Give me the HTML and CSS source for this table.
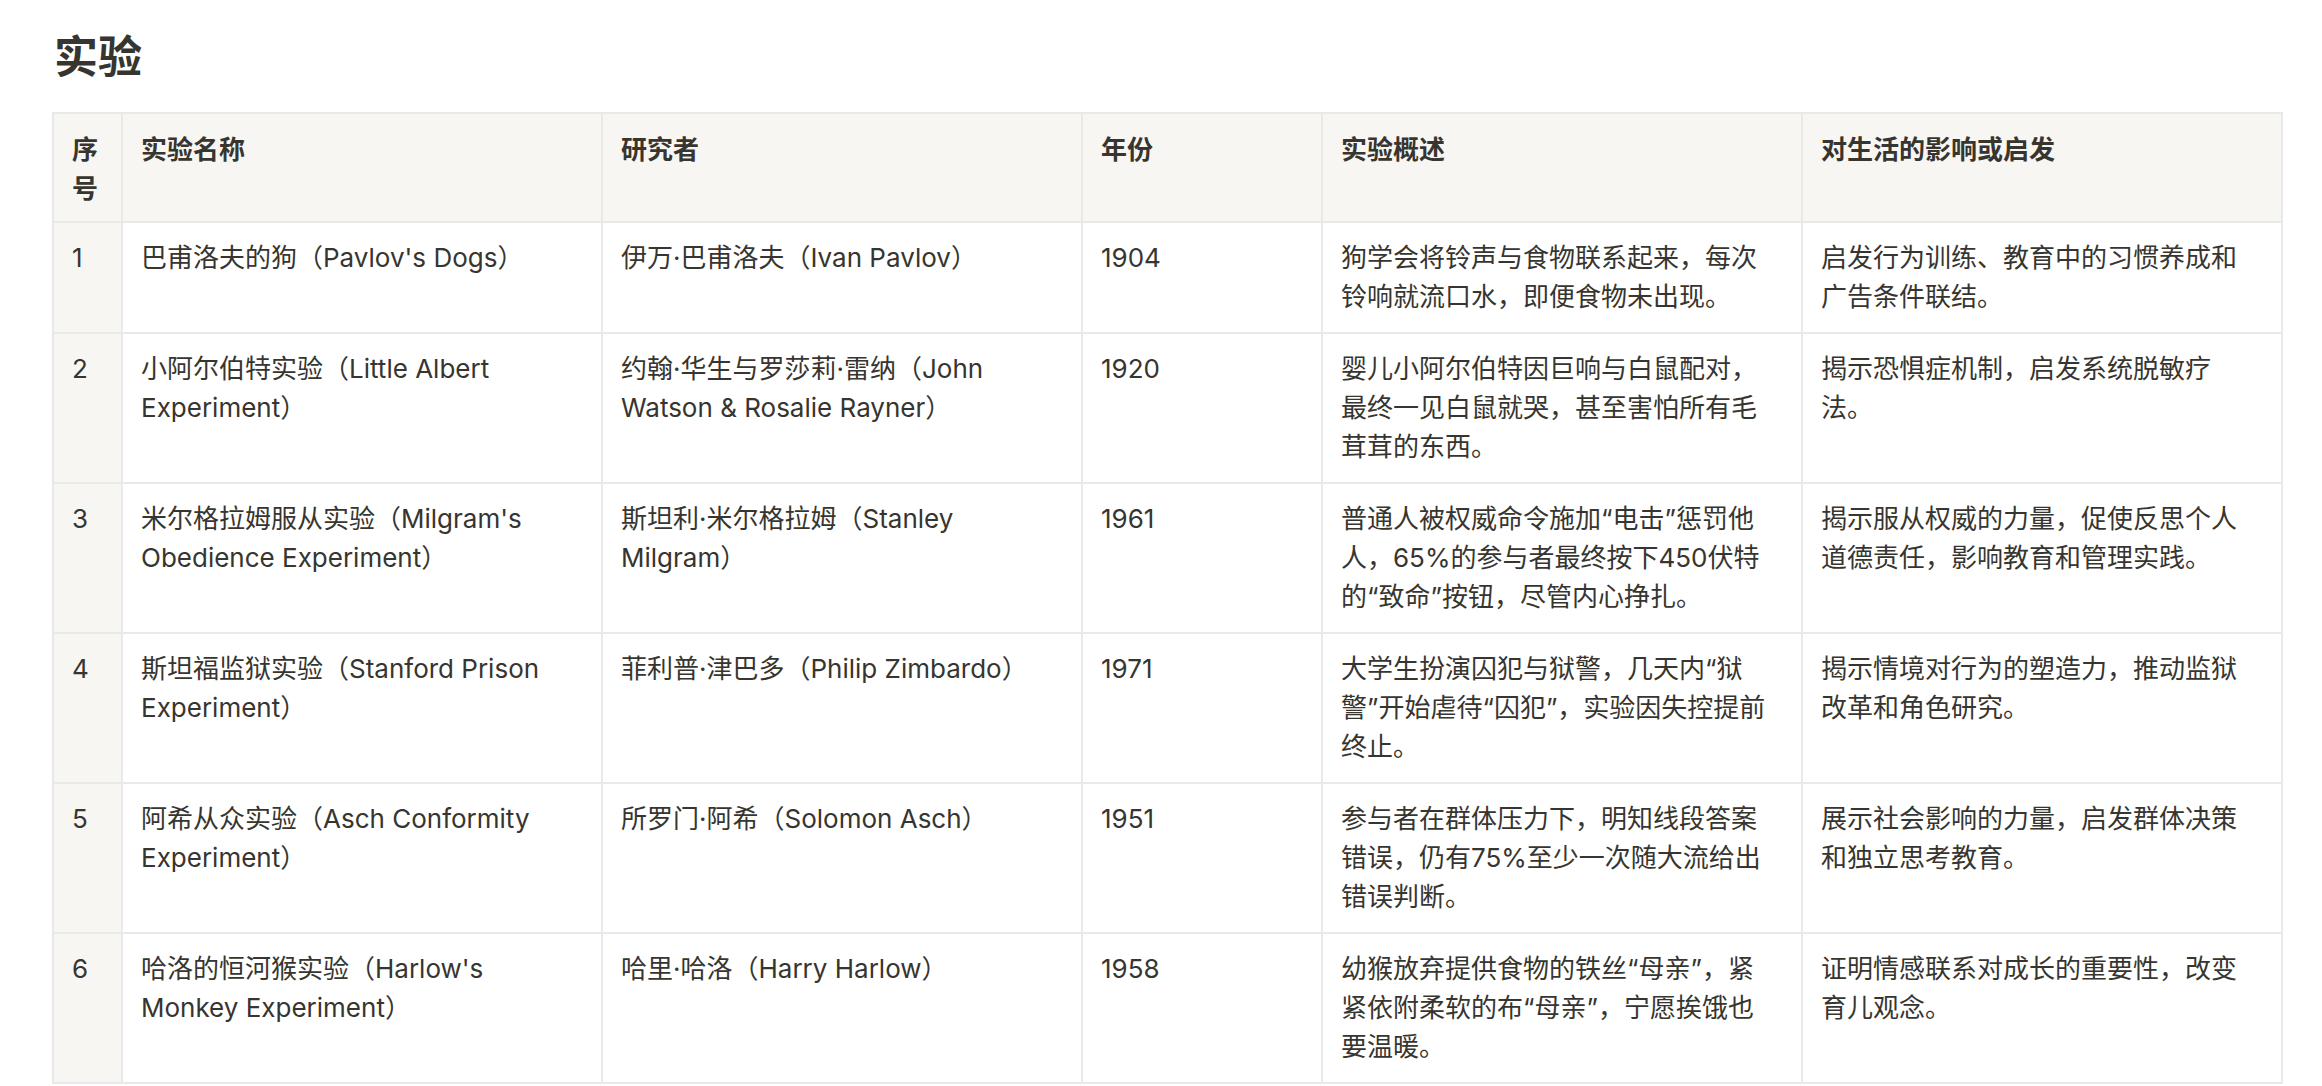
FILE: index.html
```html
<!DOCTYPE html>
<html lang="zh-CN">
<head>
<meta charset="utf-8">
<title>实验</title>
<link rel="stylesheet" href="styles.css">
</head>
<body>
<main class="page">
  <h1 class="page-title">实验</h1>
  <table class="data-table">
    <colgroup>
      <col class="col-idx">
      <col class="col-wide">
      <col class="col-wide">
      <col class="col-narrow">
      <col class="col-wide">
      <col class="col-wide">
    </colgroup>
    <thead>
      <tr>
        <th class="cell row-head">序号</th>
        <th class="cell">实验名称</th>
        <th class="cell">研究者</th>
        <th class="cell">年份</th>
        <th class="cell">实验概述</th>
        <th class="cell">对生活的影响或启发</th>
      </tr>
    </thead>
    <tbody>
      <tr>
        <td class="cell row-head">1</td>
        <td class="cell">巴甫洛夫的狗（Pavlov's Dogs）</td>
        <td class="cell">伊万·巴甫洛夫（Ivan Pavlov）</td>
        <td class="cell">1904</td>
        <td class="cell">狗学会将铃声与食物联系起来，每次铃响就流口水，即便食物未出现。</td>
        <td class="cell">启发行为训练、教育中的习惯养成和广告条件联结。</td>
      </tr>
      <tr>
        <td class="cell row-head">2</td>
        <td class="cell">小阿尔伯特实验（Little Albert Experiment）</td>
        <td class="cell">约翰·华生与罗莎莉·雷纳（John Watson &amp; Rosalie Rayner）</td>
        <td class="cell">1920</td>
        <td class="cell">婴儿小阿尔伯特因巨响与白鼠配对，最终一见白鼠就哭，甚至害怕所有毛茸茸的东西。</td>
        <td class="cell">揭示恐惧症机制，启发系统脱敏疗法。</td>
      </tr>
      <tr>
        <td class="cell row-head">3</td>
        <td class="cell">米尔格拉姆服从实验（Milgram's Obedience Experiment）</td>
        <td class="cell">斯坦利·米尔格拉姆（Stanley Milgram）</td>
        <td class="cell">1961</td>
        <td class="cell">普通人被权威命令施加“电击”惩罚他人，65%的参与者最终按下450伏特的“致命”按钮，尽管内心挣扎。</td>
        <td class="cell">揭示服从权威的力量，促使反思个人道德责任，影响教育和管理实践。</td>
      </tr>
      <tr>
        <td class="cell row-head">4</td>
        <td class="cell">斯坦福监狱实验（Stanford Prison Experiment）</td>
        <td class="cell">菲利普·津巴多（Philip Zimbardo）</td>
        <td class="cell">1971</td>
        <td class="cell">大学生扮演囚犯与狱警，几天内“狱警”开始虐待“囚犯”，实验因失控提前终止。</td>
        <td class="cell">揭示情境对行为的塑造力，推动监狱改革和角色研究。</td>
      </tr>
      <tr>
        <td class="cell row-head">5</td>
        <td class="cell">阿希从众实验（Asch Conformity Experiment）</td>
        <td class="cell">所罗门·阿希（Solomon Asch）</td>
        <td class="cell">1951</td>
        <td class="cell">参与者在群体压力下，明知线段答案错误，仍有75%至少一次随大流给出错误判断。</td>
        <td class="cell">展示社会影响的力量，启发群体决策和独立思考教育。</td>
      </tr>
      <tr>
        <td class="cell row-head">6</td>
        <td class="cell">哈洛的恒河猴实验（Harlow's Monkey Experiment）</td>
        <td class="cell">哈里·哈洛（Harry Harlow）</td>
        <td class="cell">1958</td>
        <td class="cell">幼猴放弃提供食物的铁丝“母亲”，紧紧依附柔软的布“母亲”，宁愿挨饿也要温暖。</td>
        <td class="cell">证明情感联系对成长的重要性，改变育儿观念。</td>
      </tr>
    </tbody>
  </table>
</main>
</body>
</html>
```

FILE: styles.css
```css
html, body {
  margin: 0;
  padding: 0;
  background: #ffffff;
}

body {
  font-family: "Inter", "Noto Sans CJK SC", sans-serif;
  color: #37352f;
  -webkit-font-smoothing: antialiased;
}

.page {
  padding: 29px 0 0 52px;
}

.page-title {
  margin: 0 0 26px 2px;
  font-size: 44px;
  line-height: 57px;
  font-weight: 700;
  color: #37352f;
}

.data-table {
  table-layout: fixed;
  border-collapse: separate;
  border-spacing: 0;
  width: 2231px;
  border-top: 2px solid #e9e9e7;
  border-left: 2px solid #e9e9e7;
  font-size: 26px;
  line-height: 39px;
}

.col-idx { width: 69px; }
.col-wide { width: 480px; }
.col-narrow { width: 240px; }

.cell {
  padding: 15px 28px 16px 18px;
  border-right: 2px solid #e9e9e7;
  border-bottom: 2px solid #e9e9e7;
  text-align: left;
  vertical-align: top;
  font-weight: 400;
  word-wrap: break-word;
}

.cell.row-head {
  padding-right: 18px;
  background: #f7f6f3;
}

thead .cell {
  padding-top: 16px;
  padding-bottom: 13px;
  background: #f7f6f3;
  font-weight: 600;
}
```
